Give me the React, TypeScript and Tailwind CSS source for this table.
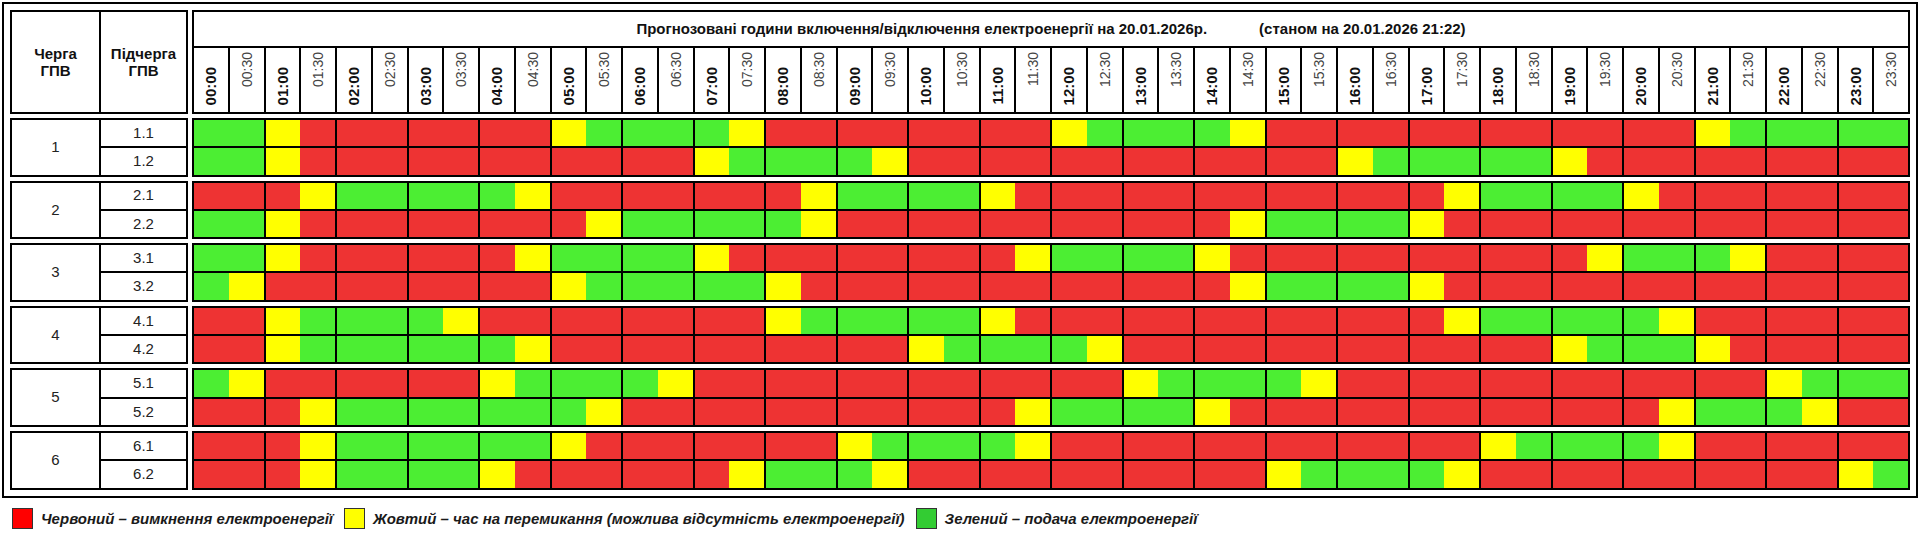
import React from "react";

const ROWS: { group: string; subs: [string, string][] }[] = [
  { group: "1", subs: [["1.1", "GG YR RR RR RR YG GG GY RR RR RR RR YG GG GY RR RR RR RR RR RR YG GG GG"], ["1.2", "GG YR RR RR RR RR RR YG GG GY RR RR RR RR RR RR YG GG GG YR RR RR RR RR"]] },
  { group: "2", subs: [["2.1", "RR RY GG GG GY RR RR RR RY GG GG YR RR RR RR RR RR RY GG GG YR RR RR RR"], ["2.2", "GG YR RR RR RR RY GG GG GY RR RR RR RR RR RY GG GG YR RR RR RR RR RR RR"]] },
  { group: "3", subs: [["3.1", "GG YR RR RR RY GG GG YR RR RR RR RY GG GG YR RR RR RR RR RY GG GY RR RR"], ["3.2", "GY RR RR RR RR YG GG GG YR RR RR RR RR RR RY GG GG YR RR RR RR RR RR RR"]] },
  { group: "4", subs: [["4.1", "RR YG GG GY RR RR RR RR YG GG GG YR RR RR RR RR RR RY GG GG GY RR RR RR"], ["4.2", "RR YG GG GG GY RR RR RR RR RR YG GG GY RR RR RR RR RR RR YG GG YR RR RR"]] },
  { group: "5", subs: [["5.1", "GY RR RR RR YG GG GY RR RR RR RR RR RR YG GG GY RR RR RR RR RR RR YG GG"], ["5.2", "RR RY GG GG GG GY RR RR RR RR RR RY GG GG YR RR RR RR RR RR RY GG GY RR"]] },
  { group: "6", subs: [["6.1", "RR RY GG GG GG YR RR RR RR YG GG GY RR RR RR RR RR RR YG GG GY RR RR RR"], ["6.2", "RR RY GG GG YR RR RR RY GG GY RR RR RR RR RR YG GG GY RR RR RR RR RR YG"]] },
];

const COLOR: Record<string, string> = {
  R: "bg-[#EE3333]",
  Y: "bg-[#FFFF00]",
  G: "bg-[#4CEE33]",
};

const TIMES = Array.from({ length: 48 }, (_, i) => {
  const h = String(Math.floor(i / 2)).padStart(2, "0");
  const m = i % 2 === 0 ? "00" : "30";
  return { label: `${h}:${m}`, full: i % 2 === 0 };
});

function TimeCell({ label, full }: { label: string; full: boolean }) {
  return (
    <div
      className={
        "bg-white flex flex-col items-center " +
        (full ? "justify-end pb-[7px]" : "justify-start pt-[4px]")
      }
    >
      <span
        className={
          "[writing-mode:vertical-rl] rotate-180 leading-none " +
          (full ? "text-[15px] font-bold text-[#111]" : "text-[14px] font-normal text-[#444]")
        }
      >
        {label}
      </span>
    </div>
  );
}

function DataRow({ data }: { data: string }) {
  const hours = data.split(" ");
  return (
    <div className="grid grid-cols-24 gap-[2px]">
      {hours.map((pair, i) => (
        <div key={i} className="flex">
          <div className={"flex-1 " + COLOR[pair[0]]} />
          <div className={"flex-1 " + COLOR[pair[1]]} />
        </div>
      ))}
    </div>
  );
}

function LegendItem({ color, text }: { color: string; text: string }) {
  return (
    <div className="flex items-center">
      <div className={"w-[21px] h-[21px] border border-[#333] " + color} />
      <span className="ml-[8px] text-[15px] font-bold italic text-[#1a1a1a] whitespace-nowrap">{text}</span>
    </div>
  );
}

export default function App() {
  return (
    <div className="w-[1920px] h-[542px] bg-white p-[2px] font-['Liberation_Sans',Arial,sans-serif] text-black">
      <div className="border-2 border-black p-[6px]">
        {/* header */}
        <div className="flex gap-[4px] h-[104px]">
          <div className="w-[178px] grid grid-cols-[87px_1fr] gap-[2px] bg-black p-[2px]">
            <div className="bg-white flex items-center justify-center text-center text-[15px] font-bold leading-[17px] text-[#111]">
              Черга
              <br />
              ГПВ
            </div>
            <div className="bg-white flex items-center justify-center text-center text-[15px] font-bold leading-[17px] text-[#111]">
              Підчерга
              <br />
              ГПВ
            </div>
          </div>
          <div className="flex-1 flex flex-col bg-black p-[2px] gap-[2px]">
            <div className="h-[34px] bg-white flex items-center justify-center gap-[52px] text-[15px] font-bold text-[#111]">
              <span>Прогнозовані години включення/відключення електроенергії на 20.01.2026р.</span>
              <span>(станом на 20.01.2026 21:22)</span>
            </div>
            <div className="flex-1 grid grid-cols-48 gap-[2px]">
              {TIMES.map((t) => (
                <TimeCell key={t.label} label={t.label} full={t.full} />
              ))}
            </div>
          </div>
        </div>
        {/* groups */}
        <div className="flex flex-col gap-[4px] mt-[4px]">
          {ROWS.map((g) => (
            <div key={g.group} className="flex gap-[4px] h-[58.6px]">
              <div className="w-[178px] grid grid-cols-[87px_1fr] grid-rows-2 gap-[2px] bg-black p-[2px]">
                <div className="row-span-2 bg-white flex items-center justify-center text-[15px] text-[#222]">
                  {g.group}
                </div>
                {g.subs.map(([name]) => (
                  <div key={name} className="bg-white flex items-center justify-center text-[15px] text-[#222]">
                    {name}
                  </div>
                ))}
              </div>
              <div className="flex-1 grid grid-rows-2 gap-[2px] bg-black p-[2px]">
                {g.subs.map(([name, data]) => (
                  <DataRow key={name} data={data} />
                ))}
              </div>
            </div>
          ))}
        </div>
      </div>
      {/* legend */}
      <div className="flex items-center mt-[10px] ml-[10px]">
        <LegendItem color="bg-[#FF0000]" text="Червоний – вимкнення електроенергії" />
        <div className="w-[11px]" />
        <LegendItem color="bg-[#FFFF00]" text="Жовтий – час на перемикання (можлива відсутність електроенергії)" />
        <div className="w-[11px]" />
        <LegendItem color="bg-[#33CC33]" text="Зелений – подача електроенергії" />
      </div>
    </div>
  );
}
